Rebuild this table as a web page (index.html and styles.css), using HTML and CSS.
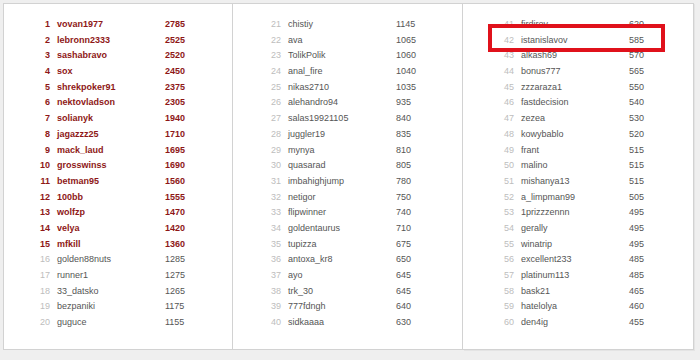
FILE: index.html
```html
<!DOCTYPE html>
<html>
<head>
<meta charset="utf-8">
<link rel="stylesheet" href="styles.css">
</head>
<body>
<div class="board">
  <div class="panel p1">
    <div class="list">
      <div class="row top"><span class="n">1</span><span class="name">vovan1977</span><span class="s">2785</span></div>
      <div class="row top"><span class="n">2</span><span class="name">lebronn2333</span><span class="s">2525</span></div>
      <div class="row top"><span class="n">3</span><span class="name">sashabravo</span><span class="s">2520</span></div>
      <div class="row top"><span class="n">4</span><span class="name">sox</span><span class="s">2450</span></div>
      <div class="row top"><span class="n">5</span><span class="name">shrekpoker91</span><span class="s">2375</span></div>
      <div class="row top"><span class="n">6</span><span class="name">nektovladson</span><span class="s">2305</span></div>
      <div class="row top"><span class="n">7</span><span class="name">solianyk</span><span class="s">1940</span></div>
      <div class="row top"><span class="n">8</span><span class="name">jagazzz25</span><span class="s">1710</span></div>
      <div class="row top"><span class="n">9</span><span class="name">mack_laud</span><span class="s">1695</span></div>
      <div class="row top"><span class="n">10</span><span class="name">grosswinss</span><span class="s">1690</span></div>
      <div class="row top"><span class="n">11</span><span class="name">betman95</span><span class="s">1560</span></div>
      <div class="row top"><span class="n">12</span><span class="name">100bb</span><span class="s">1555</span></div>
      <div class="row top"><span class="n">13</span><span class="name">wolfzp</span><span class="s">1470</span></div>
      <div class="row top"><span class="n">14</span><span class="name">velya</span><span class="s">1420</span></div>
      <div class="row top"><span class="n">15</span><span class="name">mfkill</span><span class="s">1360</span></div>
      <div class="row"><span class="n">16</span><span class="name">golden88nuts</span><span class="s">1285</span></div>
      <div class="row"><span class="n">17</span><span class="name">runner1</span><span class="s">1275</span></div>
      <div class="row"><span class="n">18</span><span class="name">33_datsko</span><span class="s">1265</span></div>
      <div class="row"><span class="n">19</span><span class="name">bezpaniki</span><span class="s">1175</span></div>
      <div class="row"><span class="n">20</span><span class="name">guguce</span><span class="s">1155</span></div>
    </div>
  </div>
  <div class="panel p2">
    <div class="list">
      <div class="row"><span class="n">21</span><span class="name">chistiy</span><span class="s">1145</span></div>
      <div class="row"><span class="n">22</span><span class="name">ava</span><span class="s">1065</span></div>
      <div class="row"><span class="n">23</span><span class="name">TolikPolik</span><span class="s">1060</span></div>
      <div class="row"><span class="n">24</span><span class="name">anal_fire</span><span class="s">1040</span></div>
      <div class="row"><span class="n">25</span><span class="name">nikas2710</span><span class="s">1035</span></div>
      <div class="row"><span class="n">26</span><span class="name">alehandro94</span><span class="s">935</span></div>
      <div class="row"><span class="n">27</span><span class="name">salas19921105</span><span class="s">840</span></div>
      <div class="row"><span class="n">28</span><span class="name">juggler19</span><span class="s">835</span></div>
      <div class="row"><span class="n">29</span><span class="name">mynya</span><span class="s">810</span></div>
      <div class="row"><span class="n">30</span><span class="name">quasarad</span><span class="s">805</span></div>
      <div class="row"><span class="n">31</span><span class="name">imbahighjump</span><span class="s">780</span></div>
      <div class="row"><span class="n">32</span><span class="name">netigor</span><span class="s">750</span></div>
      <div class="row"><span class="n">33</span><span class="name">flipwinner</span><span class="s">740</span></div>
      <div class="row"><span class="n">34</span><span class="name">goldentaurus</span><span class="s">710</span></div>
      <div class="row"><span class="n">35</span><span class="name">tupizza</span><span class="s">675</span></div>
      <div class="row"><span class="n">36</span><span class="name">antoxa_kr8</span><span class="s">650</span></div>
      <div class="row"><span class="n">37</span><span class="name">ayo</span><span class="s">645</span></div>
      <div class="row"><span class="n">38</span><span class="name">trk_30</span><span class="s">645</span></div>
      <div class="row"><span class="n">39</span><span class="name">777fdngh</span><span class="s">640</span></div>
      <div class="row"><span class="n">40</span><span class="name">sidkaaaa</span><span class="s">630</span></div>
    </div>
  </div>
  <div class="panel p3">
    <div class="list">
      <div class="row"><span class="n">41</span><span class="name">firdirov</span><span class="s">620</span></div>
      <div class="row"><span class="n">42</span><span class="name">istanislavov</span><span class="s">585</span></div>
      <div class="row"><span class="n">43</span><span class="name">alkash69</span><span class="s">570</span></div>
      <div class="row"><span class="n">44</span><span class="name">bonus777</span><span class="s">565</span></div>
      <div class="row"><span class="n">45</span><span class="name">zzzaraza1</span><span class="s">550</span></div>
      <div class="row"><span class="n">46</span><span class="name">fastdecision</span><span class="s">540</span></div>
      <div class="row"><span class="n">47</span><span class="name">zezea</span><span class="s">530</span></div>
      <div class="row"><span class="n">48</span><span class="name">kowybablo</span><span class="s">520</span></div>
      <div class="row"><span class="n">49</span><span class="name">frant</span><span class="s">515</span></div>
      <div class="row"><span class="n">50</span><span class="name">malino</span><span class="s">515</span></div>
      <div class="row"><span class="n">51</span><span class="name">mishanya13</span><span class="s">515</span></div>
      <div class="row"><span class="n">52</span><span class="name">a_limpman99</span><span class="s">505</span></div>
      <div class="row"><span class="n">53</span><span class="name">1prizzzennn</span><span class="s">495</span></div>
      <div class="row"><span class="n">54</span><span class="name">gerally</span><span class="s">495</span></div>
      <div class="row"><span class="n">55</span><span class="name">winatrip</span><span class="s">495</span></div>
      <div class="row"><span class="n">56</span><span class="name">excellent233</span><span class="s">485</span></div>
      <div class="row"><span class="n">57</span><span class="name">platinum113</span><span class="s">485</span></div>
      <div class="row"><span class="n">58</span><span class="name">bask21</span><span class="s">465</span></div>
      <div class="row"><span class="n">59</span><span class="name">hatelolya</span><span class="s">460</span></div>
      <div class="row"><span class="n">60</span><span class="name">den4ig</span><span class="s">455</span></div>
    </div>
    <div class="mark"></div>
  </div>
</div>
</body>
</html>
```

FILE: styles.css
```css
html, body {
  margin: 0;
  padding: 0;
}
body {
  width: 700px;
  height: 360px;
  background: #efefef;
  font-family: "Liberation Sans", Arial, sans-serif;
  font-size: 9px;
  overflow: hidden;
}
.board {
  display: flex;
  padding: 3px 0 0 3px;
}
.panel {
  position: relative;
  background: #fff;
  border: 1px solid #d2d2d2;
  height: 345px;
  box-sizing: content-box;
}
.p1 { width: 228px; }
.p2 { width: 229px; border-left: none; }
.p3 { width: 230px; border-left: none; box-shadow: 1px 1px 0 #e4e4e4; }
.list {
  padding-top: 13px;
}
.p1 .list { padding-left: 26px; }
.p2 .list { padding-left: 28px; }
.p3 .list { padding-left: 31px; }
.row {
  display: grid;
  grid-template-columns: 20px 101px auto;
  column-gap: 7px;
  height: 15.7px;
  line-height: 15.7px;
  color: #555;
  white-space: nowrap;
}
.row .n {
  text-align: right;
  color: #bdbdbd;
}
.row .s {
  color: #555;
}
.row.top,
.row.top .n,
.row.top .s {
  color: #8e1717;
  font-weight: bold;
}
.mark {
  position: absolute;
  left: 25px;
  top: 20px;
  width: 169px;
  height: 20px;
  border: 4px solid #e0111b;
}
```
